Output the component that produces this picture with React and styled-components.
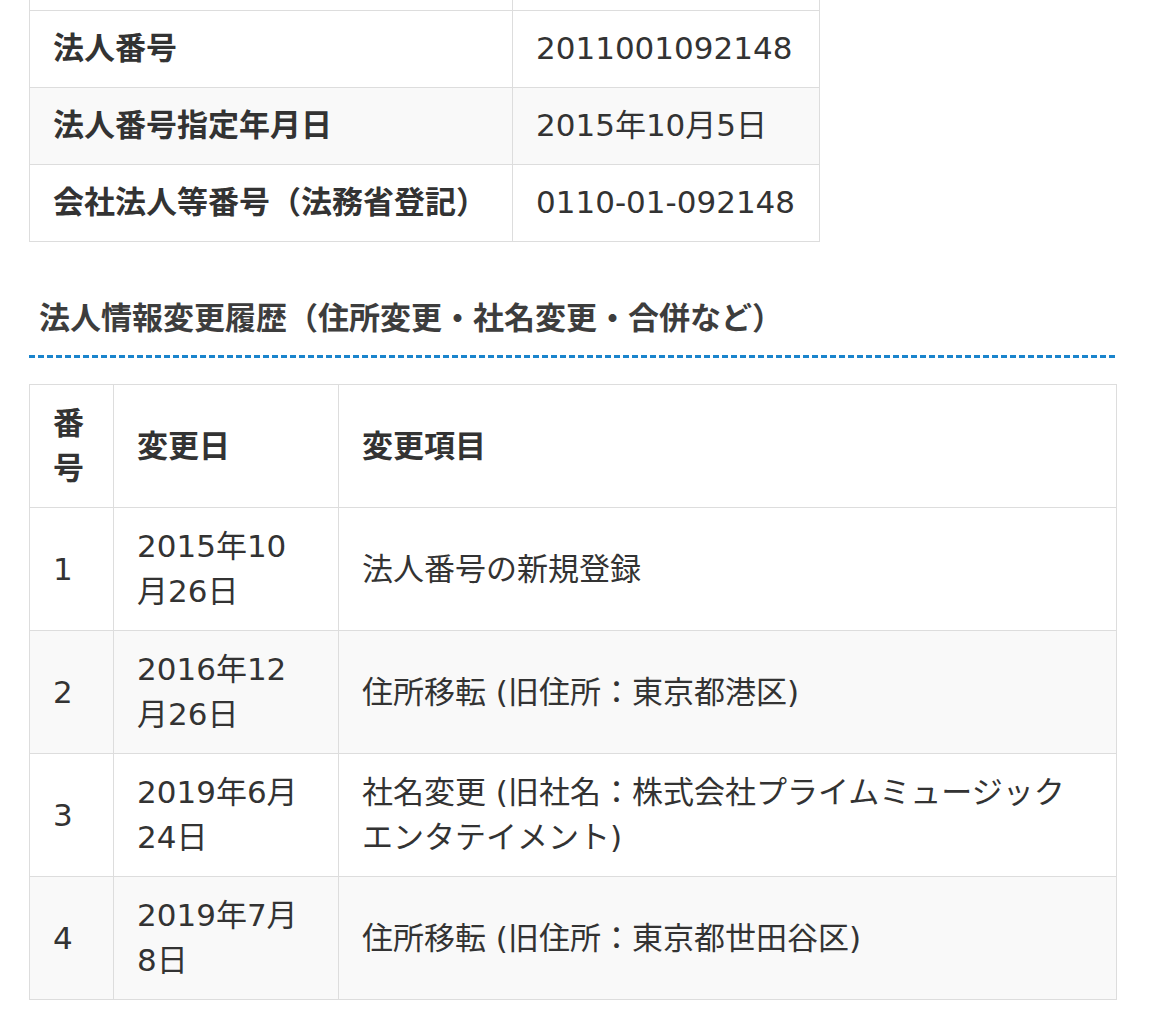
import styled, { createGlobalStyle } from "styled-components";

const GlobalStyle = createGlobalStyle`
  html, body {
    margin: 0;
    padding: 0;
    background: #fff;
  }
  body {
    font-family: "DejaVu Sans", "Noto Sans CJK JP", sans-serif;
    color: #333;
  }
`;

const basicInfo = [
  { label: "法人番号", value: "2011001092148" },
  { label: "法人番号指定年月日", value: "2015年10月5日" },
  { label: "会社法人等番号（法務省登記）", value: "0110-01-092148" },
];

const history = [
  { no: 1, date: "2015年10月26日", item: "法人番号の新規登録" },
  { no: 2, date: "2016年12月26日", item: "住所移転 (旧住所：東京都港区)" },
  {
    no: 3,
    date: "2019年6月24日",
    item: "社名変更 (旧社名：株式会社プライムミュージックエンタテイメント)",
  },
  { no: 4, date: "2019年7月8日", item: "住所移転 (旧住所：東京都世田谷区)" },
];

function App() {
  return (
    <>
      <GlobalStyle />
      <Page>
        <InfoTable>
          <colgroup>
            <col style={{ width: 483 }} />
            <col />
          </colgroup>
          <tbody>
            <CutRow>
              <td />
              <td />
            </CutRow>
            {basicInfo.map((row, i) => (
              <InfoRow key={row.label} $striped={i % 2 === 1}>
                <InfoLabel>{row.label}</InfoLabel>
                <InfoValue>{row.value}</InfoValue>
              </InfoRow>
            ))}
          </tbody>
        </InfoTable>

        <SectionTitle>法人情報変更履歴（住所変更・社名変更・合併など）</SectionTitle>

        <HistoryTable>
          <colgroup>
            <col style={{ width: 84 }} />
            <col style={{ width: 225 }} />
            <col />
          </colgroup>
          <thead>
            <tr>
              <HeadCell>番号</HeadCell>
              <HeadCell>変更日</HeadCell>
              <HeadCell>変更項目</HeadCell>
            </tr>
          </thead>
          <tbody>
            {history.map((row, i) => (
              <HistoryRow key={row.no} $striped={i % 2 === 1}>
                <Cell>{row.no}</Cell>
                <Cell>{row.date}</Cell>
                <Cell>{row.item}</Cell>
              </HistoryRow>
            ))}
          </tbody>
        </HistoryTable>
      </Page>
    </>
  );
}

export default App;

const Page = styled.div`
  width: 1088px;
  padding-left: 29px;
  padding-bottom: 22px;
`;

const InfoTable = styled.table`
  width: 791px;
  border-collapse: collapse;
  table-layout: fixed;
  font-size: 31px;
  line-height: 45px;
`;

const CutRow = styled.tr`
  td {
    height: 10px;
    padding: 0;
    border: 1px solid #ddd;
    border-top: none;
  }
`;

const InfoRow = styled.tr`
  background: ${(p) => (p.$striped ? "#f9f9f9" : "#fff")};
`;

const InfoLabel = styled.th`
  text-align: left;
  font-weight: 700;
  padding: 15px 23px 16px;
  border: 1px solid #ddd;
  white-space: nowrap;
`;

const InfoValue = styled.td`
  padding: 15px 20px 16px 23px;
  border: 1px solid #ddd;
  white-space: nowrap;
`;

const SectionTitle = styled.h3`
  margin: 54px 0 0;
  padding: 0 0 17px 10px;
  font-size: 31px;
  line-height: 45px;
  font-weight: 700;
  color: #3d3d3d;
  background-image: linear-gradient(to right, #1a84cc 6px, transparent 6px);
  background-size: 9px 3px;
  background-repeat: repeat-x;
  background-position: left bottom;
`;

const HistoryTable = styled.table`
  width: 100%;
  margin-top: 26px;
  border-collapse: collapse;
  table-layout: fixed;
  font-size: 31px;
  line-height: 45px;
`;

const HeadCell = styled.th`
  text-align: left;
  font-weight: 700;
  padding: 16px 23px;
  border: 1px solid #ddd;
  vertical-align: middle;
`;

const HistoryRow = styled.tr`
  background: ${(p) => (p.$striped ? "#f9f9f9" : "#fff")};
`;

const Cell = styled.td`
  padding: 16px 23px;
  border: 1px solid #ddd;
  vertical-align: middle;
`;
